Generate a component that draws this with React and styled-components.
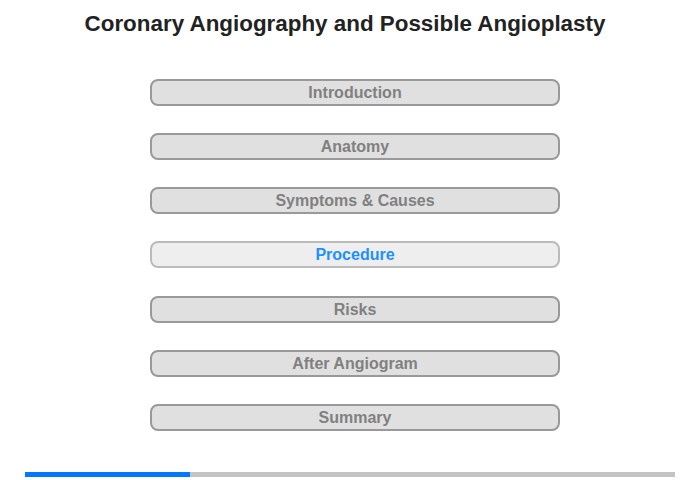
import React from 'react'
import styled, { createGlobalStyle } from 'styled-components'

const Global = createGlobalStyle`
  body {
    margin: 0;
    background: #fff;
    font-family: "Liberation Sans", Arial, sans-serif;
  }
`

const sections = [
  'Introduction',
  'Anatomy',
  'Symptoms & Causes',
  'Procedure',
  'Risks',
  'After Angiogram',
  'Summary',
]

function App() {
  const current = 'Procedure'

  return (
    <Page>
      <Global />
      <Title>Coronary Angiography and Possible Angioplasty</Title>
      <Menu>
        {sections.map((s) => (
          <MenuButton key={s} active={s === current}>
            {s}
          </MenuButton>
        ))}
      </Menu>
      <Progress>
        <ProgressFill style={{ width: `${(165 / 650) * 100}%` }} />
      </Progress>
    </Page>
  )
}

const Page = styled.div`
  width: 700px;
  height: 480px;
  display: flex;
  flex-direction: column;
`

const Title = styled.h1`
  margin: 10px 0 0;
  padding-right: 10px;
  text-align: center;
  font-size: 22.4px;
  line-height: 28px;
  font-weight: bold;
  color: #222;
`

const Menu = styled.div`
  display: flex;
  flex-direction: column;
  gap: 27.17px;
  margin: 41px 0 0 150px;
`

const MenuButton = styled.div`
  box-sizing: border-box;
  width: 410px;
  height: 27px;
  border: 2px solid ${(p) => (p.active ? '#bbb' : '#999')};
  border-radius: 8px;
  background: ${(p) => (p.active ? '#eee' : '#e0e0e0')};
  color: ${(p) => (p.active ? '#1e90ff' : '#808080')};
  font-size: 16px;
  font-weight: bold;
  line-height: 23px;
  text-align: center;
`

const Progress = styled.div`
  margin: 41px 25px 0;
  height: 5px;
  background: #c4c4c4;
`

const ProgressFill = styled.div`
  height: 100%;
  background: #0078ff;
`

export default App
